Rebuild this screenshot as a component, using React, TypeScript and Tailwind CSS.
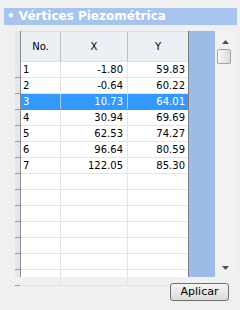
const rows = [
  { n: "1", x: "-1.80", y: "59.83" },
  { n: "2", x: "-0.64", y: "60.22" },
  { n: "3", x: "10.73", y: "64.01" },
  { n: "4", x: "30.94", y: "69.69" },
  { n: "5", x: "62.53", y: "74.27" },
  { n: "6", x: "96.64", y: "80.59" },
  { n: "7", x: "122.05", y: "85.30" },
];

const EMPTY_ROWS = 7;
const SELECTED = 2;

function ArrowUp() {
  return (
    <svg width="7" height="4" viewBox="0 0 7 4">
      <path d="M0 4 L3.5 0 L7 4 Z" fill="#505050" />
    </svg>
  );
}

function ArrowDown() {
  return (
    <svg width="7" height="4" viewBox="0 0 7 4">
      <path d="M0 0 L3.5 4 L7 0 Z" fill="#505050" />
    </svg>
  );
}

export default function App() {
  const cols = "grid grid-cols-[40px_67px_60px]";
  return (
    <div
      className="flex h-[310px] w-[240px] flex-col overflow-hidden bg-[#f0f0f0] text-black"
      style={{ fontFamily: "'DejaVu Sans', Tahoma, sans-serif" }}
    >
      <div className="ml-[4px] mr-[3px] mt-[8px] h-[17px] bg-[#a6c4ec] pl-[3px] text-[12px] font-bold leading-[17px] text-white">
        • Vértices Piezométrica
      </div>

      <div className="mt-[6px] flex h-[246px]">
        {/* row header strip */}
        <div className="ml-[15px] flex w-[6px] flex-col border-r border-[#8a8a8a] bg-[#e3e8ef]">
          <div className="h-[31px] shrink-0" />
          {Array.from({ length: rows.length + EMPTY_ROWS }).map((_, i) => (
            <div key={i} className="h-[16px] shrink-0 border-b border-[#9a9a9a]" />
          ))}
        </div>

        {/* grid */}
        <div className="flex w-[168px] flex-col border-r border-[#7f7f7f] bg-white text-[10px]">
          <div className={`${cols} h-[31px] shrink-0 border-b border-t border-[#dcdfe4] bg-[#eceff4]`}>
            <div className="flex items-center justify-center border-r border-[#b9bdc4]">No.</div>
            <div className="flex items-center justify-center border-r border-[#b9bdc4]">X</div>
            <div className="flex items-center justify-center">Y</div>
          </div>
          {rows.map((r, i) => {
            const sel = i === SELECTED;
            return (
              <div
                key={r.n}
                className={`${cols} h-[16px] shrink-0 border-b leading-[15px] ${
                  sel ? "border-[#3399ff] bg-[#3399ff] text-white" : "border-[#e4e4e4]"
                }`}
              >
                <div className={`border-r pl-[2px] ${sel ? "border-[#a9d0fa]" : "border-[#e4e4e4]"}`}>{r.n}</div>
                <div className={`border-r pr-[4px] text-right ${sel ? "border-[#a9d0fa]" : "border-[#e4e4e4]"}`}>
                  {r.x}
                </div>
                <div className="pr-[3px] text-right">{r.y}</div>
              </div>
            );
          })}
          {Array.from({ length: EMPTY_ROWS }).map((_, i) => (
            <div key={i} className={`${cols} h-[16px] shrink-0 border-b border-[#e4e4e4]`}>
              <div className="border-r border-[#e4e4e4]" />
              <div className="border-r border-[#e4e4e4]" />
              <div />
            </div>
          ))}
        </div>

        {/* blue column */}
        <div className="w-[26px] bg-[#9cbce8]" />

        {/* scrollbar */}
        <div className="flex w-[20px] flex-col items-center bg-[#f2f2f2]">
          <div className="mt-[8px] flex h-[6px] items-center">
            <ArrowUp />
          </div>
          <div className="ml-[-3px] mt-[4px] h-[15px] w-[14px] rounded-[2px] border border-[#a4a4a4] bg-gradient-to-r from-[#f7f7f7] to-[#dcdcdc]" />
          <div className="flex-1" />
          <div className="mb-[6px] flex h-[6px] items-center">
            <ArrowDown />
          </div>
        </div>
      </div>

      <div className="mt-[6px] flex justify-end pr-[11px]">
        <button
          type="button"
          className="h-[18px] w-[59px] rounded-[3px] border border-[#707070] bg-gradient-to-b from-[#f4f4f4] to-[#dcdcdc] text-[11px] leading-[16px] text-black"
          style={{ fontFamily: "'DejaVu Sans', Tahoma, sans-serif" }}
        >
          Aplicar
        </button>
      </div>
    </div>
  );
}
